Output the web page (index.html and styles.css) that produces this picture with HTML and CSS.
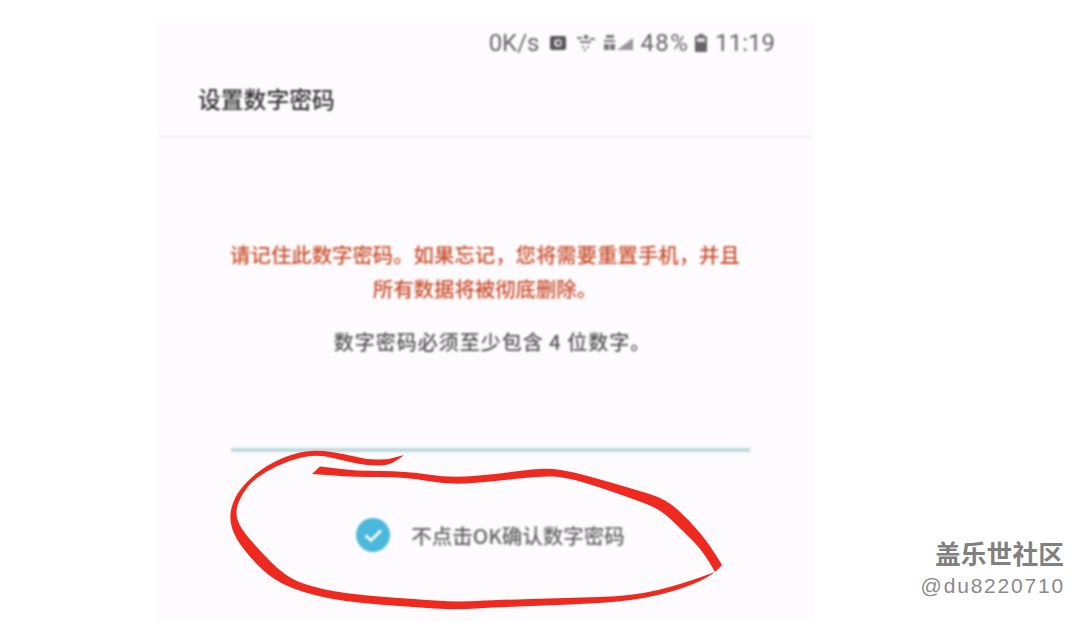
FILE: index.html
```html
<!DOCTYPE html>
<html lang="zh-CN">
<head>
<meta charset="utf-8">
<title>设置数字密码</title>
<link rel="stylesheet" href="styles.css">
</head>
<body>
<main class="phone">
  <div class="status">
    <span class="speed">0K/s</span>
    <svg class="ic-media" width="18" height="18" viewBox="0 0 18 18"><rect x="1" y="2" width="16" height="14" rx="2" fill="#555"/><circle cx="9" cy="9" r="4" fill="#fdfbfd" opacity=".75"/><circle cx="9.500" cy="9" r="1.800" fill="#444"/></svg>
    <svg class="ic-wifi" width="23" height="18" viewBox="0 0 23 18"><g fill="#777"><rect x="3" y="3" width="5" height="2"/><rect x="10" y="1" width="4" height="4"/><rect x="16" y="4" width="5" height="2"/><rect x="6" y="7" width="11" height="2"/><rect x="8" y="12" width="2" height="2"/><rect x="13" y="12" width="2" height="2"/><rect x="10" y="15" width="2" height="2"/></g></svg>
    <svg class="ic-signal" width="32" height="18" viewBox="0 0 32 18"><g fill="#777"><rect x="4" y="1" width="8" height="3"/><rect x="2" y="6" width="11" height="2"/><rect x="2" y="10" width="5" height="6"/><rect x="8" y="10" width="5" height="6"/><path d="M15 16 31 4v12z" opacity=".75"/></g></svg>
    <span class="level">48%</span>
    <svg class="ic-battery" width="14" height="20" viewBox="0 0 14 20"><path d="M4.500 1h5v2h2.500a1 1 0 0 1 1 1v14a1 1 0 0 1-1 1H2a1 1 0 0 1-1-1V4a1 1 0 0 1 1-1h2.500z" fill="#666"/><rect x="3" y="5" width="8" height="4" fill="#ddd"/></svg>
    <span class="clock">11:19</span>
  </div>
  <h1 class="title">设置数字密码</h1>
  <section class="body">
    <p class="warning">请记住此数字密码。如果忘记，您将需要重置手机，并且<br>所有数据将被彻底删除。</p>
    <p class="hint">数字密码必须至少包含 4 位数字。</p>
    <div class="field"></div>
    <div class="option">
      <svg class="check" width="34" height="34" viewBox="0 0 34 34"><circle cx="17" cy="17" r="17" fill="#4cb8dc"/><path d="M9.500 17.500 15 22.500 25 12.500" fill="none" stroke="#fff" stroke-width="2.600"/></svg>
      <span>不点击OK确认数字密码</span>
    </div>
  </section>
</main>

<svg class="scribble" width="1079" height="622" viewBox="0 0 1079 622">
  <path fill="#ee2a20" d="M404 455L389 459Q389 459 379 459.500Q369 460 357 457Q345 454 331.500 452Q318 450 306 451.500Q294 453 280.500 459Q267 465 257 473Q247 481 240.500 489.500Q234 498 231.500 508Q229 518 232 528Q235 538 244.500 550Q254 562 264 571Q274 580 287.500 586Q301 592 323 597Q345 602 379 604.500Q413 607 435 608.500Q457 610 477 608.500Q497 607 531 606Q565 605 599 603Q633 601 658 595Q683 589 699 581.500Q715 574 722 565Q710 545 700 533Q690 521 678 510Q666 499 649.500 494Q633 489 616 484Q599 479 582 474.500Q565 470 553 469Q541 468 519 471Q497 474 473.500 476Q450 478 428 474.500Q406 471 380.500 471Q355 471 337 468.500L320 466.500L312 474L333 475.500Q355 477 380.500 477Q406 477 428 481Q450 485 473.500 483Q497 481 519 478.500Q541 476 553 476.500Q565 477 582 482Q599 487 616 493Q633 499 646.500 504Q660 509 671.500 520Q683 531 693.500 541.500Q704 552 715 572Q683 584 658 590Q633 596 599 597Q565 598 531 599Q497 600 477 601Q457 602 435 600.500Q413 599 379 596.500Q345 594 323 589Q301 584 291 578Q281 572 271 562Q261 552 250.500 540Q240 528 237.500 519.500Q235 511 238.500 502.500Q242 494 248 486.500Q254 479 266 472Q278 465 289.500 461Q301 457 311 456Q321 455 333 458Q345 461 357 463.500Q369 466 381 465.500Q393 465 404 455Z"/>
</svg>

<aside class="mark">
  <strong>盖乐世社区</strong>
  <span>@du8220710</span>
</aside>
</body>
</html>
```

FILE: styles.css
```css
* { box-sizing: border-box; }

html, body {
  margin: 0;
  height: 622px;
  overflow: hidden;
  background: #fff;
}

body {
  font-family: "Noto Sans CJK SC", "Noto Sans", sans-serif;
}

.phone {
  width: 656px;
  height: 600px;
  margin: 22px 0 0 157px;
  background: #fdfbfd;
  filter: blur(1px);
}

.status {
  height: 42px;
  padding: 0 38px 0 0;
  display: flex;
  justify-content: flex-end;
  align-items: center;
  gap: 7px;
  font-family: Roboto, "Noto Sans", sans-serif;
  font-size: 24px;
  color: #666;
}

.level { letter-spacing: 1.400px; margin-left: -1px; margin-right: -2px; }
.ic-media { margin-left: 3px; }
.ic-wifi { margin-left: 0; }
.ic-signal { margin-left: -2px; }

.title {
  margin: 0;
  height: 74px;
  padding: 19px 0 0 41px;
  border-bottom: 2px solid #f3f1f3;
  font-size: 22.800px;
  line-height: 32px;
  font-weight: 500;
  color: #333;
}

.body {
  padding-top: 99px;
  display: flex;
  flex-direction: column;
  align-items: center;
}

.warning {
  margin: 0;
  font-size: 20.400px;
  line-height: 34px;
  font-weight: 500;
  text-align: center;
  color: #c9502f;
  white-space: nowrap;
}

.hint {
  margin: 20px 0 0 15px;
  font-size: 20px;
  line-height: 34px;
  letter-spacing: 1px;
  font-weight: 500;
  color: #555;
}

.field {
  width: 519px;
  height: 4px;
  margin-top: 89px;
  margin-left: 11px;
  background: #bcdade;
}

.option {
  margin-top: 66px;
  margin-left: 11px;
  display: flex;
  align-items: center;
  gap: 21px;
  font-size: 20.500px;
  line-height: 34px;
  font-weight: 500;
  color: #666;
}

.scribble {
  position: absolute;
  top: 0;
  left: 0;
  filter: blur(0.4px);
}

.mark {
  position: absolute;
  right: 15px;
  top: 535px;
  display: flex;
  flex-direction: column;
  align-items: flex-end;
  color: #8a8a8a;
}

.mark strong {
  font-size: 25.800px;
  line-height: 36px;
  font-weight: 700;
  color: #808080;
}

.mark span {
  font-family: "Liberation Sans", sans-serif;
  font-size: 21px;
  line-height: 30px;
  letter-spacing: 1.800px;
  margin-right: -1px;
}
```
